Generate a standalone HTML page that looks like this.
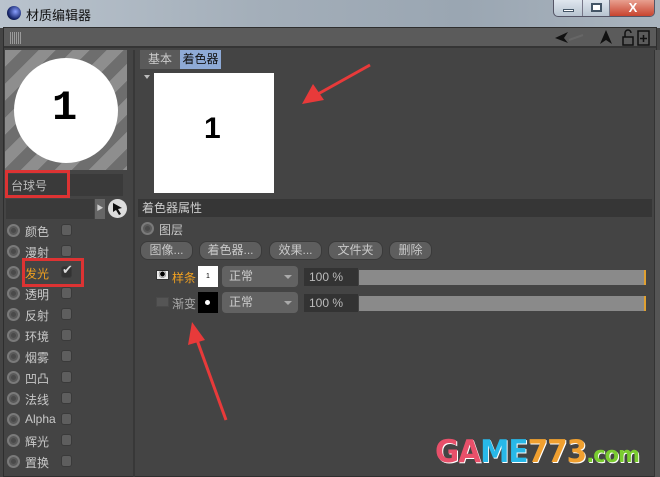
<!DOCTYPE html>
<html><head><meta charset="utf-8"><style>
*{margin:0;padding:0;box-sizing:border-box}
body{width:660px;height:477px;overflow:hidden;background:#444;font-family:"Liberation Sans","Noto Sans CJK SC",sans-serif;font-size:12px;color:#c8c8c8;position:relative}
.a{position:absolute}
.rad{position:absolute;width:13px;height:13px;border-radius:50%;background:#5a5a5a;border:2px solid #7a7a7a}
.rad::after{content:"";position:absolute;left:2px;top:2px;width:5px;height:5px;border-radius:50%;background:#4a4a4a}
.cb{position:absolute;width:11px;height:12px;border-radius:3px;background:#5e5e5e;border:1px solid #3a3a3a}
.btn{position:absolute;top:241px;height:19px;border-radius:8px;background:#5e5e5e;border:1px solid #3a3a3a;color:#c8c8c8;text-align:center;line-height:17px;font-size:12px}
.dd{position:absolute;width:76px;height:21px;border-radius:4px;background:#626262;color:#ccc;padding-left:7px;line-height:21px}
.dd::after{content:"";position:absolute;right:6px;top:9px;border:4px solid transparent;border-top:4px solid #aaa}
</style></head><body>
<!-- title bar -->
<div class="a" style="left:0;top:0;width:660px;height:28px;background:linear-gradient(90deg,#b9c3cd,#a3aeb9 40%,#9aa6b2 70%,#aab4be)"></div>
<div class="a" style="left:7px;top:6px;width:14px;height:14px;border-radius:50%;background:radial-gradient(circle at 60% 40%,#8aa0ff,#1a2a70 60%,#000)"></div>
<div class="a" style="left:26px;top:5px;font-size:13px;color:#111">材质编辑器</div>
<div class="a" style="left:553px;top:0;width:102px;height:17px;border:1px solid #556;border-top:none;border-radius:0 0 5px 5px;background:linear-gradient(#dfe6ee,#b8c4d0);overflow:hidden">
 <div class="a" style="left:0;top:0;width:29px;height:16px;border-right:1px solid #778"><div class="a" style="left:9px;top:9px;width:11px;height:3px;background:#fff;border:1px solid #456"></div></div>
 <div class="a" style="left:29px;top:0;width:27px;height:16px;border-right:1px solid #778"><div class="a" style="left:8px;top:3px;width:11px;height:9px;border:2px solid #456;background:#fff"></div></div>
 <div class="a" style="left:56px;top:0;width:46px;height:16px;background:linear-gradient(#e8a090,#c8432e);color:#fff;font-weight:bold;text-align:center;font-size:13px;line-height:15px">X</div>
</div>
<!-- frame & toolbar -->
<div class="a" style="left:3px;top:27px;width:654px;height:450px;background:#444;border:1px solid #2e2e2e"></div>
<div class="a" style="left:4px;top:28px;width:652px;height:20px;background:#5b5b5b;border-bottom:2px solid #353535"></div>
<div class="a" style="left:10px;top:32px;width:12px;height:12px;background:repeating-linear-gradient(90deg,#aaa 0 1px,transparent 1px 2px);opacity:.8"></div>
<svg class="a" style="left:550px;top:28px" width="110" height="20"><path d="M5 10 L18 4 L14 10 L18 15Z" fill="#111"/><path d="M19 12 L33 7" stroke="#666" stroke-width="2"/><path d="M56 2 L62 16 L56 12 L50 16Z" fill="#111"/><rect x="73" y="9" width="10" height="8" fill="none" stroke="#111" stroke-width="1.5"/><path d="M75 9 V5 a3 3 0 0 1 6 0" fill="none" stroke="#111" stroke-width="1.5"/><rect x="88" y="3" width="11" height="14" fill="none" stroke="#111" stroke-width="1.5"/><path d="M90 10.5h7M93.5 7v7" stroke="#111" stroke-width="1.5"/></svg>
<!-- left preview -->
<div class="a" style="left:5px;top:50px;width:122px;height:120px;overflow:hidden;background:repeating-linear-gradient(135deg,#8e8e8e 0 12px,#6e6e6e 12px 24px)">
 <div class="a" style="left:9px;top:8px;width:104px;height:105px;border-radius:50%;background:#fff"></div>
</div>
<div class="a" style="left:52px;top:84px;font-size:42px;font-weight:bold;color:#000;font-family:'Liberation Mono',monospace">1</div>
<div class="a" style="left:5px;top:174px;width:118px;height:22px;background:#3a3a3a"></div>
<div class="a" style="left:11px;top:177px;color:#bbb">台球号</div>
<div class="a" style="left:5px;top:170px;width:65px;height:28px;border:3px solid #d33"></div>
<div class="a" style="left:6px;top:199px;width:88px;height:20px;background:#3a3a3a"></div>
<div class="a" style="left:95px;top:199px;width:10px;height:20px;background:#666;color:#ccc;font-size:7px;line-height:20px;text-align:center">▶</div>
<div class="a" style="left:108px;top:199px;width:19px;height:19px;border-radius:50%;background:#ddd"><svg width="19" height="19"><path d="M5 4 L14 9 L10 10 L13 15 L11 16 L8 11 L5 13Z" fill="#111"/></svg></div>
<!-- list -->
<div class="rad" style="left:7px;top:224px"></div><div class="a" style="left:25px;top:223px">颜色</div><div class="cb" style="left:61px;top:224px"></div>
<div class="rad" style="left:7px;top:245px"></div><div class="a" style="left:25px;top:244px">漫射</div><div class="cb" style="left:61px;top:245px"></div>
<div class="rad" style="left:7px;top:266px"></div><div class="a" style="left:25px;top:265px;color:#f0a020">发光</div><div class="cb" style="left:61px;top:266px;background:#333"></div><div class="a" style="left:62px;top:262px;color:#ddd;font-size:13px">✔</div>
<div class="a" style="left:22px;top:258px;width:62px;height:29px;border:3px solid #d33"></div>
<div class="rad" style="left:7px;top:287px"></div><div class="a" style="left:25px;top:286px">透明</div><div class="cb" style="left:61px;top:287px"></div>
<div class="rad" style="left:7px;top:308px"></div><div class="a" style="left:25px;top:307px">反射</div><div class="cb" style="left:61px;top:308px"></div>
<div class="rad" style="left:7px;top:329px"></div><div class="a" style="left:25px;top:328px">环境</div><div class="cb" style="left:61px;top:329px"></div>
<div class="rad" style="left:7px;top:350px"></div><div class="a" style="left:25px;top:349px">烟雾</div><div class="cb" style="left:61px;top:350px"></div>
<div class="rad" style="left:7px;top:371px"></div><div class="a" style="left:25px;top:370px">凹凸</div><div class="cb" style="left:61px;top:371px"></div>
<div class="rad" style="left:7px;top:392px"></div><div class="a" style="left:25px;top:391px">法线</div><div class="cb" style="left:61px;top:392px"></div>
<div class="rad" style="left:7px;top:413px"></div><div class="a" style="left:25px;top:412px">Alpha</div><div class="cb" style="left:61px;top:413px"></div>
<div class="rad" style="left:7px;top:434px"></div><div class="a" style="left:25px;top:433px">辉光</div><div class="cb" style="left:61px;top:434px"></div>
<div class="rad" style="left:7px;top:455px"></div><div class="a" style="left:25px;top:454px">置换</div><div class="cb" style="left:61px;top:455px"></div>
<!-- divider -->
<div class="a" style="left:133px;top:50px;width:2px;height:427px;background:#383838"></div>
<div class="a" style="left:654px;top:50px;width:6px;height:427px;background:#555;border-left:1px solid #333"></div>
<!-- tabs -->
<div class="a" style="left:140px;top:50px;width:40px;height:19px;background:#5a5a5a;color:#ccc;text-align:center;line-height:19px">基本</div>
<div class="a" style="left:180px;top:50px;width:41px;height:19px;background:#8eaad6;color:#111;text-align:center;line-height:19px">着色器</div>
<div class="a" style="left:144px;top:75px;border:3px solid transparent;border-top:4px solid #bbb"></div>
<div class="a" style="left:154px;top:73px;width:120px;height:120px;background:#fff"></div>
<div class="a" style="left:204px;top:112px;font-size:30px;font-weight:bold;color:#000">1</div>
<!-- header -->
<div class="a" style="left:138px;top:199px;width:514px;height:18px;background:#363636;color:#ccc;padding-left:4px;line-height:18px">着色器属性</div>
<div class="rad" style="left:141px;top:222px"></div><div class="a" style="left:159px;top:221px">图层</div>
<div class="btn" style="left:140px;width:53px">图像...</div>
<div class="btn" style="left:199px;width:63px">着色器...</div>
<div class="btn" style="left:269px;width:53px">效果...</div>
<div class="btn" style="left:328px;width:55px">文件夹</div>
<div class="btn" style="left:389px;width:43px">删除</div>
<!-- rows -->
<div class="a" style="left:156px;top:270px;width:13px;height:10px;background:#eee;border:1px solid #333;font-size:8px;line-height:8px;text-align:center;color:#000">◉</div>
<div class="a" style="left:172px;top:269px;color:#f0a020">样条</div>
<div class="a" style="left:198px;top:266px;width:20px;height:21px;background:#fff;color:#000;font-size:7px;text-align:center;line-height:21px">1</div>
<div class="dd" style="left:222px;top:266px">正常</div>
<div class="a" style="left:304px;top:268px;width:54px;height:18px;background:#333;color:#bbb;padding-left:5px;line-height:18px">100 %</div>
<div class="a" style="left:359px;top:270px;width:287px;height:15px;background:#8a8a8a;border-right:2px solid #e0a030"></div>
<div class="a" style="left:156px;top:297px;width:13px;height:10px;background:#555;border:1px solid #4a4a4a"></div>
<div class="a" style="left:172px;top:295px;color:#aaa">渐变</div>
<div class="a" style="left:198px;top:292px;width:20px;height:21px;background:#000"><div class="a" style="left:7px;top:8px;width:5px;height:5px;border-radius:50%;background:#fff"></div></div>
<div class="dd" style="left:222px;top:292px">正常</div>
<div class="a" style="left:304px;top:294px;width:54px;height:18px;background:#333;color:#bbb;padding-left:5px;line-height:18px">100 %</div>
<div class="a" style="left:359px;top:296px;width:287px;height:15px;background:#8a8a8a;border-right:2px solid #e0a030"></div>
<!-- arrows -->
<svg class="a" style="left:0;top:0" width="660" height="477">
<path d="M370 65 L318 94" stroke="#e83a3a" stroke-width="3"/><path d="M302 104 L313 84 L324 100Z" fill="#e83a3a"/>
<path d="M226 420 L197 340" stroke="#e83a3a" stroke-width="3"/><path d="M192 322 L188 345 L205 340Z" fill="#e83a3a"/>
</svg>
<!-- logo -->
<div class="a" style="left:435px;top:434px;font-size:31px;font-weight:bold;letter-spacing:-1px;font-family:'DejaVu Sans',sans-serif;line-height:36px;transform:scaleX(0.95);transform-origin:left;text-shadow:1px 1px 0 #fff"><span style="color:#e8506a">GA</span><span style="color:#28b8e8">ME</span><span style="color:#f0a030">773</span><span style="color:#7acc30;font-size:22px">.com</span></div>
</body></html>
